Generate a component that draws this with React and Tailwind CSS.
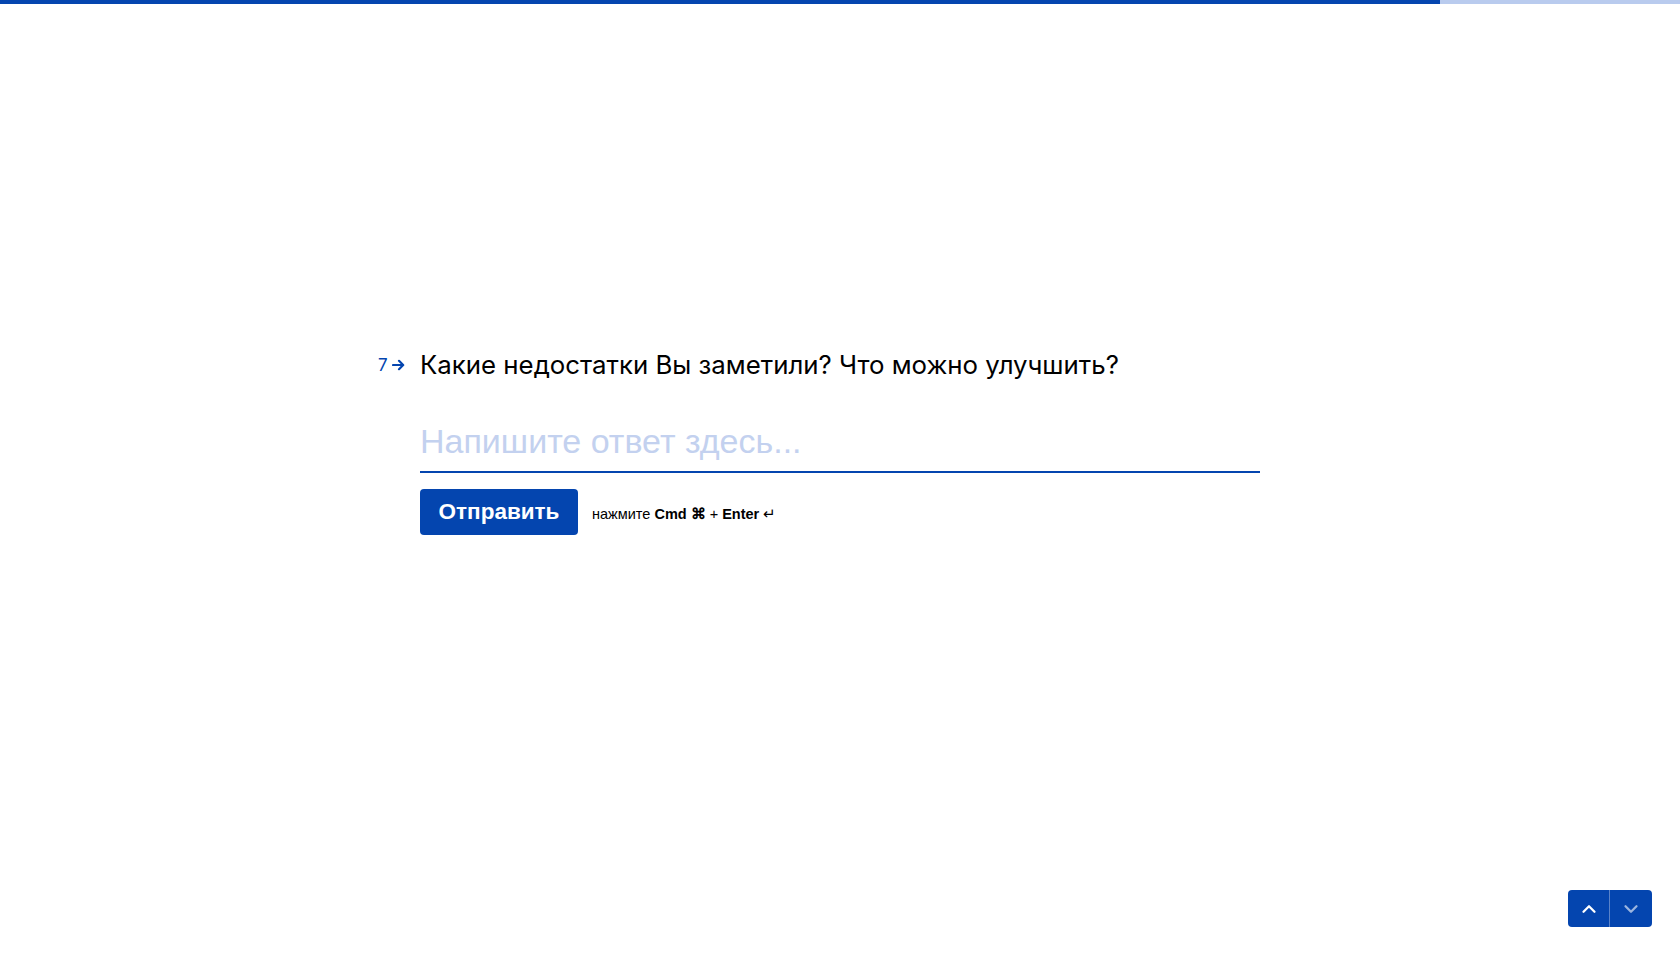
import { ChevronUp, ChevronDown } from "lucide-react";

const App = () => {
  return (
    <div className="relative h-screen w-full overflow-hidden bg-white font-['Inter',sans-serif]">
      {/* progress */}
      <div className="h-[4px] w-full bg-[#b9cbee]">
        <div className="h-full w-[85.714%] bg-[#0445af]" />
      </div>

      <div className="flex justify-center pt-[345px]">
        <div className="relative w-[840px]">
          {/* question number */}
          <div className="absolute left-[-42px] top-[6px] flex items-center gap-[4px] text-[#0445af]">
            <span className="text-[17px] leading-[20px]">7</span>
            <svg width="13" height="12" viewBox="0 0 13 12" fill="none">
              <path d="M1 6h10M7 1.8L11.2 6 7 10.2" stroke="#0445af" strokeWidth="2.2" strokeLinecap="round" strokeLinejoin="round" />
            </svg>
          </div>

          <h1 className="text-[25.8px] leading-[32px] text-black font-normal">
            Какие недостатки Вы заметили? Что можно улучшить?
          </h1>

          <input
            type="text"
            placeholder="Напишите ответ здесь..."
            className="mt-[40px] block w-full border-b-2 border-[#0445af] pb-[10px] text-[34px] leading-[40px] text-[#0445af] outline-none placeholder:text-[#c3d1ef] font-['Liberation_Sans',sans-serif]"
          />

          <div className="mt-[16px] flex items-center gap-[14px]">
            <button className="h-[46px] w-[158px] rounded-[4px] bg-[#0445af] text-[22.5px] font-bold text-white font-['Liberation_Sans',sans-serif]">
              Отправить
            </button>
            <span className="pt-[6px] text-[14.5px] text-black font-['Liberation_Sans',sans-serif]">
              нажмите <b>Cmd ⌘</b> + <b>Enter</b> ↵
            </span>
          </div>
        </div>
      </div>

      {/* nav */}
      <div className="absolute bottom-[29px] right-[28px] flex overflow-hidden rounded-[4px] bg-[#0445af]">
        <button className="flex h-[37px] w-[42px] items-center justify-center border-r border-[#5a83c9] text-white">
          <ChevronUp size={22} strokeWidth={2.5} />
        </button>
        <button className="flex h-[37px] w-[42px] items-center justify-center text-white/60">
          <ChevronDown size={22} strokeWidth={2.5} />
        </button>
      </div>
    </div>
  );
};

export default App;
